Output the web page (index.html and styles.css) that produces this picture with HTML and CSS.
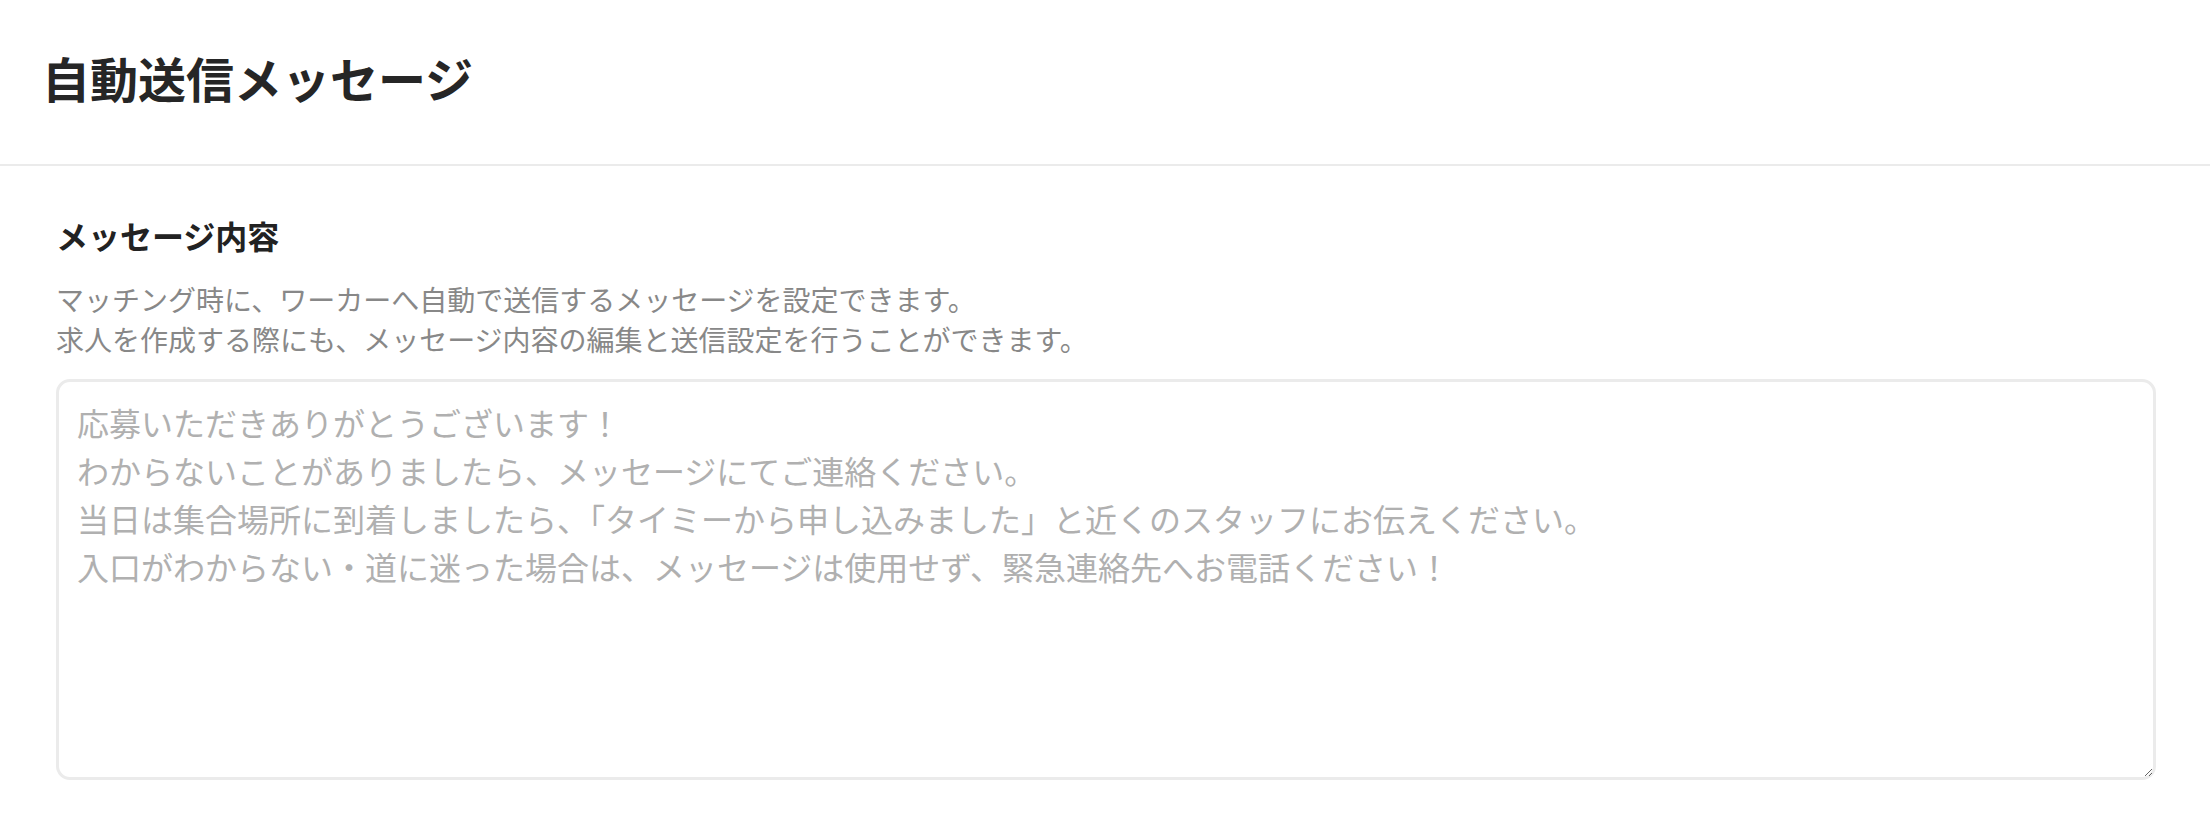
FILE: index.html
```html
<!DOCTYPE html>
<html>
<head lang="ja">
  <meta charset="UTF-8">
  <title>自動送信メッセージ</title>
  <link rel="stylesheet" href="styles.css">
</head>
<body>
  <header class="pageHeader">
    <h1 class="pageTitle">自動送信メッセージ</h1>
  </header>
  <section class="messageSection">
    <h2 class="sectionTitle">メッセージ内容</h2>
    <p class="sectionNote">マッチング時に、ワーカーへ自動で送信するメッセージを設定できます。<br>求人を作成する際にも、メッセージ内容の編集と送信設定を行うことができます。</p>
    <textarea class="messageInput" placeholder="応募いただきありがとうございます！&#10;わからないことがありましたら、メッセージにてご連絡ください。&#10;当日は集合場所に到着しましたら、「タイミーから申し込みました」と近くのスタッフにお伝えください。&#10;入口がわからない・道に迷った場合は、メッセージは使用せず、緊急連絡先へお電話ください！"></textarea>
  </section>
</body>
</html>
```

FILE: styles.css
```css
body {
  margin: 0;
  background: #fff;
  font-family: "Noto Sans CJK JP", "Noto Sans", sans-serif;
  color: #222;
}
.pageHeader {
  height: 166px;
  display: flex;
  align-items: center;
  padding: 0 42px;
  border-bottom: 2px solid #ebebeb;
  box-sizing: border-box;
}
.pageTitle {
  margin: 0;
  font-size: 48px;
  line-height: 60px;
  font-weight: bold;
  color: #262626;
  padding-bottom: 10px;
}
.messageSection {
  padding: 45px 54px 0 56px;
}
.sectionTitle {
  margin: 0;
  font-size: 32px;
  line-height: 48px;
  font-weight: bold;
  color: #222;
}
.sectionNote {
  margin: 20px 0 20px;
  font-size: 28px;
  line-height: 40px;
  color: #888;
}
.messageInput {
  display: block;
  width: 100%;
  height: 401px;
  box-sizing: border-box;
  border: 3px solid #ebebeb;
  border-radius: 14px;
  padding: 16px 18px;
  font-family: inherit;
  font-size: 32px;
  line-height: 48px;
  color: #222;
  outline: none;
}
.messageInput::placeholder {
  color: #b0b0b0;
}
```
